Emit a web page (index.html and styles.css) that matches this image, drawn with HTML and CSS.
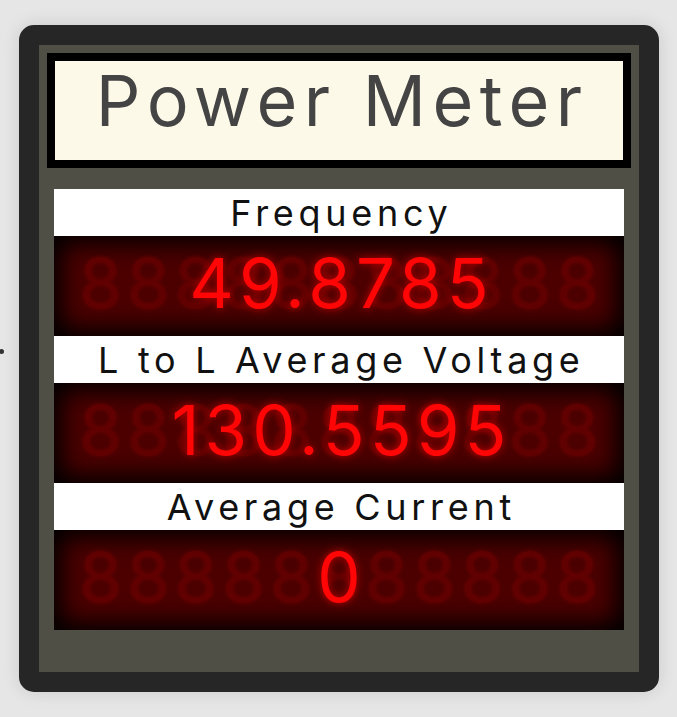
FILE: index.html
```html
<!DOCTYPE html>
<html>
<head>
<meta charset="utf-8">
<link rel="stylesheet" href="styles.css">
</head>
<body>
<span class="speck"></span>
<div class="page">
  <div class="meter">
    <div class="title"><span>Power Meter</span></div>
    <div class="readings">
      <div class="label">Frequency</div>
      <div class="display">
        <span class="ghost">88888888888</span>
        <span class="value">49.8785</span>
      </div>
      <div class="label">L to L Average Voltage</div>
      <div class="display">
        <span class="ghost">88888888888</span>
        <span class="value">130.5595</span>
      </div>
      <div class="label">Average Current</div>
      <div class="display">
        <span class="ghost">88888888888</span>
        <span class="value">0</span>
      </div>
    </div>
  </div>
</div>
</body>
</html>
```

FILE: styles.css
```css
html, body {
  margin: 0;
  padding: 0;
}
body {
  background: #e6e6e6;
  width: 677px;
  height: 717px;
  overflow: hidden;
  position: relative;
  font-family: "Inter", "Liberation Sans", sans-serif;
}
.speck {
  position: absolute;
  left: -1px;
  top: 349px;
  width: 5px;
  height: 5px;
  border-radius: 50%;
  background: #333;
  filter: blur(0.6px);
}
.page {
  padding: 25px 0 0 19px;
}
.meter {
  width: 584px;
  height: 611px;
  border: 20px solid #262626;
  border-radius: 15px;
  background: #4f4f46;
  box-shadow: 0 0 18px rgba(0,0,0,0.12);
  padding: 8px;
  display: flex;
  flex-direction: column;
}
.meter > * { flex: none; }
.title {
  height: 99px;
  box-sizing: content-box;
  border: 8px solid #000;
  background: #fdf9e8;
  display: flex;
  align-items: center;
  justify-content: center;
  color: #444;
  font-size: 70px;
  font-weight: 400;
  letter-spacing: 6.5px;
}
.title span {
  padding-left: 6.5px;
  margin-top: -20px;
}
.readings {
  margin: 21px 7px 0;
  display: flex;
  flex-direction: column;
}
.label {
  height: 47px;
  background: #fff;
  color: #111;
  font-size: 36px;
  letter-spacing: 4.7px;
  padding-left: 4.7px;
  display: flex;
  align-items: center;
  justify-content: center;
}
.display {
  height: 100px;
  background: #4c0000;
  box-shadow: inset 0 0 24px 8px #000;
  display: grid;
  align-items: center;
  justify-items: center;
  overflow: hidden;
}
.ghost, .value {
  grid-area: 1 / 1;
  font-size: 69px;
  letter-spacing: 5px;
  padding-left: 5px;
  line-height: 1;
  margin-top: -5px;
}
.ghost {
  color: #610000;
  text-shadow: 0 0 4px rgba(120,0,0,0.6);
}
.value {
  color: #ff0505;
  text-shadow: 0 0 8px rgba(255,0,0,0.6);
}
```
